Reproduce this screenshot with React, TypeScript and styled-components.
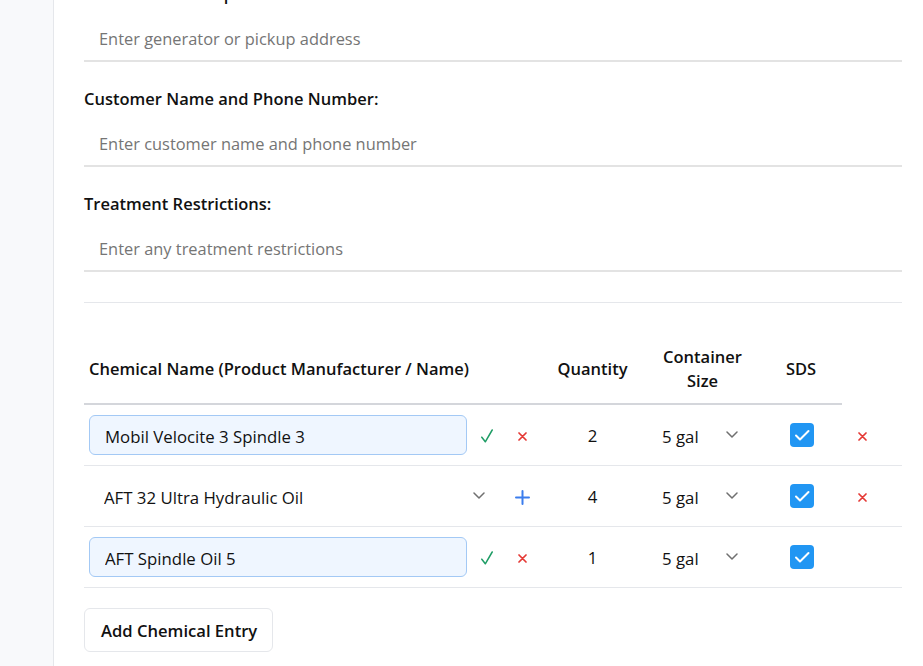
import React, { useLayoutEffect, useRef } from "react";
import styled, { createGlobalStyle } from "styled-components";

const GlobalStyle = createGlobalStyle`
  html, body { margin: 0; padding: 0; height: 100%; }
  body {
    font-family: "Open Sans", "Noto Sans", "DejaVu Sans", sans-serif;
    color: #111;
    background: #fff;
    overflow: hidden;
  }
  *, *::before, *::after { box-sizing: border-box; }
`;

const Page = styled.div`
  display: flex;
  height: 100vh;
`;

const Sidebar = styled.aside`
  width: 54px;
  flex: none;
  background: #f8f9fb;
  border-right: 1px solid #e5e7eb;
`;

const Main = styled.main`
  flex: 1;
  min-width: 0;
  overflow-y: auto;
  scrollbar-width: none;
  &::-webkit-scrollbar { display: none; }
  padding: 0 21px 40px 30px;
`;

const Field = styled.div`
  & + & { margin-top: 25px; }
`;

const Label = styled.label`
  display: block;
  font-size: 16.5px;
  font-weight: 600;
  line-height: 24px;
  margin-bottom: 10px;
  color: #111;
`;

const TextInput = styled.input`
  display: block;
  width: 100%;
  height: 46px;
  border: none;
  border-bottom: 2px solid #e3e3e3;
  padding: 0 15px;
  font: inherit;
  font-size: 16.4px;
  color: #111;
  background: transparent;
  outline: none;
  &::placeholder { color: #757575; }
`;

const Divider = styled.hr`
  margin: 30px 0 0;
  border: none;
  border-top: 1px solid #e5e7eb;
`;

const Table = styled.table`
  margin-top: 30px;
  width: 100%;
  border-collapse: separate;
  border-spacing: 0;
  table-layout: fixed;
`;

const Th = styled.th<{ $align?: string; $plain?: boolean }>`
  padding: 12px 5px 10px;
  font-size: 16.5px;
  font-weight: 600;
  line-height: 24px;
  color: #111;
  text-align: ${(p) => p.$align || "center"};
  border-bottom: ${(p) => (p.$plain ? "none" : "2px solid #d4d6db")};
`;

const Td = styled.td<{ $align?: string; $tight?: boolean }>`
  padding: ${(p) => (p.$tight ? "10px 3px 10px 5px" : "10px 5px")};
  height: 61px;
  border-bottom: 1px solid #e5e7eb;
  text-align: ${(p) => p.$align || "center"};
  vertical-align: middle;
`;

const NameGroup = styled.div`
  display: flex;
  align-items: center;
  gap: 5px;
`;

const NameInput = styled.input`
  flex: 1;
  min-width: 0;
  height: 40px;
  padding: 2px 14px 0 15px;
  border: 1px solid #a3c9f5;
  border-radius: 6px;
  background: #eff6ff;
  font: inherit;
  font-size: 16.8px;
  color: #111;
  outline: none;
`;

const SelectWrap = styled.div<{ $grow?: boolean }>`
  position: relative;
  flex: ${(p) => (p.$grow ? "1" : "none")};
  min-width: 0;
  width: ${(p) => (p.$grow ? "auto" : "100%")};
`;

const Select = styled.select<{ $pad: number }>`
  appearance: none;
  -webkit-appearance: none;
  width: 100%;
  height: 40px;
  border: none;
  background: transparent;
  padding: 2px 36px 0 ${(p) => p.$pad}px;
  font: inherit;
  font-size: 16.8px;
  color: #111;
  outline: none;
`;

const Chevron = styled.svg`
  position: absolute;
  right: 17px;
  top: 50%;
  margin-top: -4px;
  pointer-events: none;
`;

const IconButton = styled.button`
  flex: none;
  width: 30px;
  height: 30px;
  padding: 2px 0 0;
  border: none;
  background: transparent;
  display: inline-flex;
  align-items: center;
  justify-content: center;
  cursor: pointer;
`;

const QtyInput = styled.input`
  width: 100%;
  height: 40px;
  padding-top: 2px;
  border: none;
  background: transparent;
  text-align: center;
  font: inherit;
  font-size: 16.8px;
  color: #111;
  outline: none;
`;

const CheckBox = styled.span`
  display: inline-flex;
  align-items: center;
  justify-content: center;
  width: 24px;
  height: 24px;
  margin-left: 2px;
  border-radius: 4px;
  background: #2196f3;
  vertical-align: middle;
`;

const AddButton = styled.button`
  margin-top: 20px;
  height: 44px;
  padding: 0 15px 0 16px;
  border: 1px solid #e5e7eb;
  border-radius: 6px;
  background: #fff;
  font: inherit;
  font-size: 16.6px;
  font-weight: 600;
  color: #111;
  cursor: pointer;
`;

const ChevronIcon = () => (
  <Chevron width="12" height="7" viewBox="0 0 12 7" fill="none">
    <path d="M1 1l5 5 5-5" stroke="#707070" strokeWidth="1.5" strokeLinecap="round" strokeLinejoin="round" />
  </Chevron>
);

const CheckIcon = () => (
  <svg width="12" height="14" viewBox="0 0 12 14" fill="none">
    <path d="M0.8 8.2L4.3 12.8L11.2 1" stroke="#1f9d66" strokeWidth="1.5" strokeLinecap="round" strokeLinejoin="round" />
  </svg>
);

const CrossIcon = () => (
  <svg width="9" height="9" viewBox="0 0 9 9" fill="none">
    <path d="M1 1l7 7M8 1L1 8" stroke="#e53935" strokeWidth="1.7" strokeLinecap="round" />
  </svg>
);

const PlusIcon = () => (
  <svg width="15" height="15" viewBox="0 0 15 15" fill="none">
    <path d="M7.5 1v13M1 7.5h13" stroke="#3b7ded" strokeWidth="2" strokeLinecap="round" />
  </svg>
);

const BoxCheck = () => (
  <CheckBox>
    <svg width="24" height="24" viewBox="0 0 24 24" fill="none">
      <path d="M6 12.5l4 4 8.5-8.5" stroke="#fff" strokeWidth="2" strokeLinecap="round" strokeLinejoin="round" />
    </svg>
  </CheckBox>
);

type Row = {
  name: string;
  mode: "edit" | "select";
  qty: string;
  size: string;
  removable: boolean;
};

const rows: Row[] = [
  { name: "Mobil Velocite 3 Spindle 3", mode: "edit", qty: "2", size: "5 gal", removable: true },
  { name: "AFT 32 Ultra Hydraulic Oil", mode: "select", qty: "4", size: "5 gal", removable: true },
  { name: "AFT Spindle Oil 5", mode: "edit", qty: "1", size: "5 gal", removable: false },
];

const fields = [
  { label: "Generator / Pickup Address:", placeholder: "Enter generator or pickup address" },
  { label: "Customer Name and Phone Number:", placeholder: "Enter customer name and phone number" },
  { label: "Treatment Restrictions:", placeholder: "Enter any treatment restrictions" },
];

export default function App() {
  const mainRef = useRef<HTMLElement>(null);

  useLayoutEffect(() => {
    if (mainRef.current) mainRef.current.scrollTop = 18;
  }, []);

  return (
    <>
      <GlobalStyle />
      <Page>
        <Sidebar />
        <Main ref={mainRef}>
          {fields.map((f) => (
            <Field key={f.label}>
              <Label>{f.label}</Label>
              <TextInput placeholder={f.placeholder} />
            </Field>
          ))}
          <Divider />
          <Table>
            <colgroup>
              <col style={{ width: 456 }} />
              <col style={{ width: 105 }} />
              <col style={{ width: 115 }} />
              <col style={{ width: 82 }} />
              <col style={{ width: 60 }} />
            </colgroup>
            <thead>
              <tr>
                <Th $align="left">Chemical Name (Product Manufacturer / Name)</Th>
                <Th>Quantity</Th>
                <Th>Container Size</Th>
                <Th>SDS</Th>
                <Th $plain />
              </tr>
            </thead>
            <tbody>
              {rows.map((r) => (
                <tr key={r.name}>
                  <Td $align="left" $tight>
                    <NameGroup>
                      {r.mode === "edit" ? (
                        <>
                          <NameInput defaultValue={r.name} />
                          <IconButton aria-label="Confirm"><CheckIcon /></IconButton>
                          <IconButton aria-label="Cancel"><CrossIcon /></IconButton>
                        </>
                      ) : (
                        <>
                          <SelectWrap $grow>
                            <Select $pad={15} defaultValue={r.name}>
                              <option>{r.name}</option>
                            </Select>
                            <ChevronIcon />
                          </SelectWrap>
                          <IconButton aria-label="Add"><PlusIcon /></IconButton>
                        </>
                      )}
                    </NameGroup>
                  </Td>
                  <Td>
                    <QtyInput defaultValue={r.qty} />
                  </Td>
                  <Td $align="left">
                    <SelectWrap>
                      <Select $pad={12} defaultValue={r.size}>
                        <option>{r.size}</option>
                      </Select>
                      <ChevronIcon />
                    </SelectWrap>
                  </Td>
                  <Td>
                    <BoxCheck />
                  </Td>
                  <Td $align="left">
                    {r.removable && (
                      <IconButton aria-label="Remove"><CrossIcon /></IconButton>
                    )}
                  </Td>
                </tr>
              ))}
            </tbody>
          </Table>
          <AddButton>Add Chemical Entry</AddButton>
        </Main>
      </Page>
    </>
  );
}
